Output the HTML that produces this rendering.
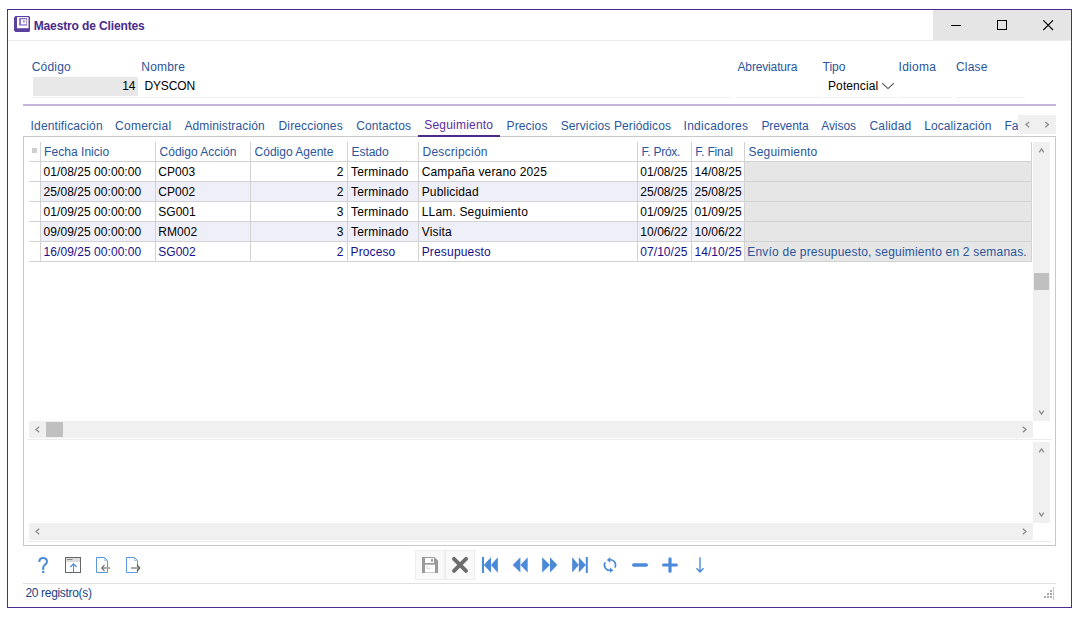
<!DOCTYPE html>
<html><head><meta charset="utf-8">
<style>
*{margin:0;padding:0;box-sizing:border-box}
html,body{width:1080px;height:618px;overflow:hidden;background:#fff;font-family:"Liberation Sans",sans-serif;font-size:12px;color:#000}
.a{position:absolute}
.t{position:absolute;white-space:nowrap;line-height:14px}
</style></head><body>
<div class="a" style="left:7px;top:9px;width:1065px;height:599px;border:1px solid #4b2c8c"></div>
<div class="a" style="left:933px;top:10px;width:138px;height:30px;background:#e5e5e5"></div>
<div class="a" style="left:8px;top:40px;width:925px;height:1px;background:#ececec"></div>
<div class="a" style="left:933px;top:40px;width:138px;height:1px;background:#ececec"></div>
<svg class="a" style="left:0;top:0" width="40" height="40" viewBox="0 0 40 40">
<path d="M15.5 16 H29 L30 17 V31 L29 32 H15.5 L14 30.5 V17.5 Z" fill="#5a3f9e"/>
<rect x="17" y="17.1" width="11.5" height="11.1" fill="#fff"/>
<rect x="19.1" y="18" width="7.9" height="7.6" fill="#8a72c2"/>
<rect x="21" y="19.3" width="5.3" height="5" fill="#fff"/>
<rect x="22.8" y="20.1" width="2" height="2.6" fill="#a99bd3"/>
</svg>
<div class="a" style="left:951px;top:25px;width:10px;height:1px;background:#000"></div>
<div class="a" style="left:997px;top:20px;width:10px;height:10px;border:1px solid #000"></div>
<svg class="a" style="left:1043px;top:20px" width="11" height="11" viewBox="0 0 11 11"><path d="M0.3 0.3L10 10M10 0.3L0.3 10" stroke="#000" stroke-width="1.1"/></svg>
<div class="a" style="left:33px;top:77px;width:105px;height:19px;background:#e8e8e8"></div>
<svg class="a" style="left:882px;top:83px" width="12" height="7" viewBox="0 0 12 7"><path d="M0.3 0.2L6 5.6L11.7 0.2" stroke="#555" stroke-width="1.05" fill="none"/></svg>
<div class="a" style="left:31px;top:97px;width:109px;height:1px;background:#efefef"></div>
<div class="a" style="left:141px;top:97px;width:590px;height:1px;background:#efefef"></div>
<div class="a" style="left:736px;top:97px;width:85px;height:1px;background:#efefef"></div>
<div class="a" style="left:823px;top:97px;width:74px;height:1px;background:#efefef"></div>
<div class="a" style="left:899px;top:97px;width:53px;height:1px;background:#efefef"></div>
<div class="a" style="left:956px;top:97px;width:69px;height:1px;background:#efefef"></div>
<div class="a" style="left:23px;top:104px;width:1033px;height:2px;background:#c3b5da"></div>
<div class="a" style="left:23px;top:136px;width:1033px;height:410px;border:1px solid #c8c8c8"></div>
<div class="a" style="left:418px;top:135px;width:82px;height:2px;background:#4b2a8a"></div>
<div class="a" style="left:745px;top:162px;width:286px;height:19px;background:#e6e6e6"></div>
<div class="a" style="left:41px;top:182px;width:990px;height:19px;background:#efeff9"></div>
<div class="a" style="left:745px;top:182px;width:286px;height:19px;background:#e6e6e6"></div>
<div class="a" style="left:745px;top:202px;width:286px;height:19px;background:#e6e6e6"></div>
<div class="a" style="left:41px;top:222px;width:990px;height:19px;background:#efeff9"></div>
<div class="a" style="left:745px;top:222px;width:286px;height:19px;background:#e6e6e6"></div>
<div class="a" style="left:745px;top:242px;width:286px;height:19px;background:#e6e6e6"></div>
<div class="a" style="left:40px;top:142px;width:1px;height:120px;background:#d2d2d2"></div>
<div class="a" style="left:155px;top:142px;width:1px;height:120px;background:#d2d2d2"></div>
<div class="a" style="left:250px;top:142px;width:1px;height:120px;background:#d2d2d2"></div>
<div class="a" style="left:347px;top:142px;width:1px;height:120px;background:#d2d2d2"></div>
<div class="a" style="left:418px;top:142px;width:1px;height:120px;background:#d2d2d2"></div>
<div class="a" style="left:637px;top:142px;width:1px;height:120px;background:#d2d2d2"></div>
<div class="a" style="left:691px;top:142px;width:1px;height:120px;background:#d2d2d2"></div>
<div class="a" style="left:744px;top:142px;width:1px;height:120px;background:#d2d2d2"></div>
<div class="a" style="left:1031px;top:142px;width:1px;height:120px;background:#d2d2d2"></div>
<div class="a" style="left:29px;top:161px;width:1003px;height:1px;background:#d2d2d2"></div>
<div class="a" style="left:29px;top:181px;width:1003px;height:1px;background:#d2d2d2"></div>
<div class="a" style="left:29px;top:201px;width:1003px;height:1px;background:#d2d2d2"></div>
<div class="a" style="left:29px;top:221px;width:1003px;height:1px;background:#d2d2d2"></div>
<div class="a" style="left:29px;top:241px;width:1003px;height:1px;background:#d2d2d2"></div>
<div class="a" style="left:29px;top:261px;width:1003px;height:1px;background:#d2d2d2"></div>
<div class="a" style="left:32px;top:148px;width:5px;height:5px;background:#cfcfcf"></div>
<div class="t" style="left:33.70px;top:19px;color:#4a2a8a;font-weight:bold;letter-spacing:-0.13px">Maestro de Clientes</div>
<div class="t" style="left:31.70px;top:60px;color:#2a559c;letter-spacing:0.2px">Código</div>
<div class="t" style="left:141.30px;top:60px;color:#2a559c;letter-spacing:0.2px">Nombre</div>
<div class="t" style="left:737.50px;top:60px;color:#2a559c;letter-spacing:-0.15px">Abreviatura</div>
<div class="t" style="left:822.50px;top:60px;color:#2a559c">Tipo</div>
<div class="t" style="left:898.50px;top:60px;color:#2a559c;letter-spacing:0.3px">Idioma</div>
<div class="t" style="left:956.00px;top:60px;color:#2a559c;letter-spacing:0.2px">Clase</div>
<div class="t" style="left:122.20px;top:79px;color:#000">14</div>
<div class="t" style="left:144.50px;top:79px;color:#000;letter-spacing:-0.15px">DYSCON</div>
<div class="t" style="left:828.00px;top:79px;color:#000;letter-spacing:0.1px">Potencial</div>
<div class="t" style="left:30.60px;top:119px;color:#2a559c;letter-spacing:0.15px">Identificación</div>
<div class="t" style="left:115.10px;top:119px;color:#2a559c;letter-spacing:0.25px">Comercial</div>
<div class="t" style="left:184.40px;top:119px;color:#2a559c;letter-spacing:0.12px">Administración</div>
<div class="t" style="left:278.50px;top:119px;color:#2a559c;letter-spacing:0.15px">Direcciones</div>
<div class="t" style="left:356.30px;top:119px;color:#2a559c;letter-spacing:0.09px">Contactos</div>
<div class="t" style="left:506.50px;top:119px;color:#2a559c;letter-spacing:0.15px">Precios</div>
<div class="t" style="left:560.70px;top:119px;color:#2a559c;letter-spacing:0.12px">Servicios Periódicos</div>
<div class="t" style="left:683.60px;top:119px;color:#2a559c;letter-spacing:0.24px">Indicadores</div>
<div class="t" style="left:761.40px;top:119px;color:#2a559c;letter-spacing:-0.12px">Preventa</div>
<div class="t" style="left:821.20px;top:119px;color:#2a559c;letter-spacing:-0.05px">Avisos</div>
<div class="t" style="left:869.40px;top:119px;color:#2a559c;letter-spacing:0.2px">Calidad</div>
<div class="t" style="left:924.20px;top:119px;color:#2a559c;letter-spacing:0.1px">Localización</div>
<div class="t" style="left:1004.40px;top:119px;color:#2a559c;letter-spacing:0.1px">Fa</div>
<div class="t" style="left:424.30px;top:118px;color:#5b2d9e;letter-spacing:0.2px">Seguimiento</div>
<div class="t" style="left:44.10px;top:145px;color:#2a559c;letter-spacing:0.04px">Fecha Inicio</div>
<div class="t" style="left:159.60px;top:145px;color:#2a559c">Código Acción</div>
<div class="t" style="left:254.60px;top:145px;color:#2a559c">Código Agente</div>
<div class="t" style="left:351.50px;top:145px;color:#2a559c;letter-spacing:-0.05px">Estado</div>
<div class="t" style="left:422.60px;top:145px;color:#2a559c;letter-spacing:0.22px">Descripción</div>
<div class="t" style="left:641.50px;top:145px;color:#2a559c;letter-spacing:-0.25px">F. Próx.</div>
<div class="t" style="left:695.20px;top:145px;color:#2a559c;letter-spacing:-0.15px">F. Final</div>
<div class="t" style="left:748.50px;top:145px;color:#2a559c;letter-spacing:0.2px">Seguimiento</div>
<div class="t" style="left:43.60px;top:165px;color:#000;letter-spacing:0.05px">01/08/25 00:00:00</div>
<div class="t" style="left:158.20px;top:165px;color:#000;letter-spacing:0.05px">CP003</div>
<div class="t" style="left:336.70px;top:165px;color:#000">2</div>
<div class="t" style="left:351.10px;top:165px;color:#000;letter-spacing:0.17px">Terminado</div>
<div class="t" style="left:421.70px;top:165px;color:#000;letter-spacing:0.17px">Campaña verano 2025</div>
<div class="t" style="left:640.30px;top:165px;color:#000;letter-spacing:0.05px">01/08/25</div>
<div class="t" style="left:694.50px;top:165px;color:#000;letter-spacing:0.05px">14/08/25</div>
<div class="t" style="left:43.60px;top:185px;color:#000;letter-spacing:0.05px">25/08/25 00:00:00</div>
<div class="t" style="left:158.20px;top:185px;color:#000;letter-spacing:0.05px">CP002</div>
<div class="t" style="left:336.70px;top:185px;color:#000">2</div>
<div class="t" style="left:351.10px;top:185px;color:#000;letter-spacing:0.17px">Terminado</div>
<div class="t" style="left:421.70px;top:185px;color:#000;letter-spacing:0.17px">Publicidad</div>
<div class="t" style="left:640.30px;top:185px;color:#000;letter-spacing:0.05px">25/08/25</div>
<div class="t" style="left:694.50px;top:185px;color:#000;letter-spacing:0.05px">25/08/25</div>
<div class="t" style="left:43.60px;top:205px;color:#000;letter-spacing:0.05px">01/09/25 00:00:00</div>
<div class="t" style="left:158.20px;top:205px;color:#000;letter-spacing:0.05px">SG001</div>
<div class="t" style="left:336.70px;top:205px;color:#000">3</div>
<div class="t" style="left:351.10px;top:205px;color:#000;letter-spacing:0.17px">Terminado</div>
<div class="t" style="left:421.70px;top:205px;color:#000;letter-spacing:0.17px">LLam. Seguimiento</div>
<div class="t" style="left:640.30px;top:205px;color:#000;letter-spacing:0.05px">01/09/25</div>
<div class="t" style="left:694.50px;top:205px;color:#000;letter-spacing:0.05px">01/09/25</div>
<div class="t" style="left:43.60px;top:225px;color:#000;letter-spacing:0.05px">09/09/25 00:00:00</div>
<div class="t" style="left:158.20px;top:225px;color:#000;letter-spacing:0.05px">RM002</div>
<div class="t" style="left:336.70px;top:225px;color:#000">3</div>
<div class="t" style="left:351.10px;top:225px;color:#000;letter-spacing:0.17px">Terminado</div>
<div class="t" style="left:421.70px;top:225px;color:#000;letter-spacing:0.17px">Visita</div>
<div class="t" style="left:640.30px;top:225px;color:#000;letter-spacing:0.05px">10/06/22</div>
<div class="t" style="left:694.50px;top:225px;color:#000;letter-spacing:0.05px">10/06/22</div>
<div class="t" style="left:43.60px;top:245px;color:#16118a;letter-spacing:0.05px">16/09/25 00:00:00</div>
<div class="t" style="left:158.20px;top:245px;color:#16118a;letter-spacing:0.05px">SG002</div>
<div class="t" style="left:336.70px;top:245px;color:#16118a">2</div>
<div class="t" style="left:350.60px;top:245px;color:#16118a;letter-spacing:0.1px">Proceso</div>
<div class="t" style="left:421.70px;top:245px;color:#16118a;letter-spacing:0.17px">Presupuesto</div>
<div class="t" style="left:640.30px;top:245px;color:#16118a;letter-spacing:0.05px">07/10/25</div>
<div class="t" style="left:694.50px;top:245px;color:#16118a;letter-spacing:0.05px">14/10/25</div>
<div class="t" style="left:747.30px;top:245px;color:#2a559c;letter-spacing:0.2px">Envío de presupuesto, seguimiento en 2 semanas.</div>
<div class="t" style="left:25.40px;top:586px;color:#213f84;letter-spacing:-0.32px">20 registro(s)</div>
<div class="a" style="left:1018px;top:115px;width:38px;height:19px;background:#f0f0f0"></div>
<div class="a" style="left:1033px;top:142px;width:17px;height:279px;background:#f0f0f0"></div>
<div class="a" style="left:1034px;top:273px;width:15px;height:17px;background:#c0c0c0"></div>
<div class="a" style="left:29px;top:421px;width:1004px;height:17px;background:#f0f0f0"></div>
<div class="a" style="left:46px;top:422px;width:17px;height:15px;background:#c0c0c0"></div>
<div class="a" style="left:27px;top:439px;width:1025px;height:1px;background:#ececec"></div>
<div class="a" style="left:1033px;top:442px;width:17px;height:81px;background:#f0f0f0"></div>
<div class="a" style="left:29px;top:523px;width:1004px;height:17px;background:#f0f0f0"></div>
<div class="a" style="left:27px;top:541px;width:1025px;height:1px;background:#ececec"></div>
<div class="a" style="left:23px;top:583px;width:1033px;height:1px;background:#e0e0e0"></div>
<svg class="a" style="left:0;top:0" width="1080" height="618"><path d="M1029.2 121.89999999999999L1026 124.6L1029.2 127.3 M1045.3 121.89999999999999L1048.5 124.6L1045.3 127.3 M1039.2 152.3L1041.5 149L1043.8 152.3 M1039.2 410.7L1041.5 414L1043.8 410.7 M39.2 426.8L36 429.5L39.2 432.2 M1022.8 426.8L1026 429.5L1022.8 432.2 M1039.2 452.3L1041.5 449L1043.8 452.3 M1039.2 512.7L1041.5 516L1043.8 512.7 M39.2 528.8L36 531.5L39.2 534.2 M1022.8 528.8L1026 531.5L1022.8 534.2" stroke="#8c8c8c" stroke-width="1.3" fill="none"/></svg>
<!-- footer icons -->
<svg class="a" style="left:0;top:0" width="1080" height="618" viewBox="0 0 1080 618">
<g fill="none" stroke="#4a8ad8" stroke-width="2">
<path d="M39.3 562 C39.3 556.8 47 556.8 47 561.5 C47 564.5 43.2 565 43.2 567.5 L43.2 570"/>
</g>
<rect x="42.1" y="571" width="2.2" height="2" fill="#4a8ad8"/>
<!-- window up icon -->
<rect x="65.5" y="557.5" width="15" height="15" fill="#fff" stroke="#666" stroke-width="1"/>
<rect x="66" y="558" width="14" height="4" fill="#dcdcdc"/>
<line x1="67" y1="559.5" x2="72.5" y2="559.5" stroke="#888" stroke-width="1"/>
<path d="M73.5 573 L73.5 564 M70.3 567 L73.5 563.8 L76.7 567" stroke="#4a8ad8" stroke-width="1.1" fill="none"/>
<!-- doc left -->
<path d="M96.5 557.5 L104.5 557.5 L107.5 560.5 L107.5 572.5 L96.5 572.5 Z" fill="none" stroke="#5b97de" stroke-width="1"/>
<path d="M104.5 557.5 L104.5 560.5 L107.5 560.5" fill="none" stroke="#9fc2ec" stroke-width="1"/>
<path d="M102 568 L110 568" stroke="#aaa" stroke-width="2"/>
<path d="M104.5 565 L101.8 568 L104.5 571" stroke="#555" stroke-width="1.1" fill="none"/>
<!-- doc right -->
<path d="M126.5 557.5 L134.5 557.5 L137.5 560.5 L137.5 572.5 L126.5 572.5 Z" fill="none" stroke="#5b97de" stroke-width="1"/>
<path d="M134.5 557.5 L134.5 560.5 L137.5 560.5" fill="none" stroke="#9fc2ec" stroke-width="1"/>
<path d="M131 568 L139 568" stroke="#aaa" stroke-width="2"/>
<path d="M137 565 L139.8 568 L137 571" stroke="#555" stroke-width="1.1" fill="none"/>

<!-- buttons -->
<rect x="415.5" y="550.5" width="29" height="29" fill="#f9f9f9" stroke="#ededed" stroke-width="1"/>
<rect x="445.5" y="550.5" width="29" height="29" fill="#f9f9f9" stroke="#ededed" stroke-width="1"/>
<!-- save -->
<path d="M422 557 L434.3 557 L438 560.6 L438 573 L422 573 Z" fill="#9a9a9a"/>
<rect x="425" y="558" width="9" height="5" fill="#fff"/>
<rect x="431" y="559" width="2" height="2.7" fill="#9a9a9a"/>
<rect x="425" y="564.7" width="10" height="7.8" fill="#fff"/>
<path d="M426.3 566.8 L428 566.8 M426.3 568.3 L430.5 568.3" stroke="#c4c4c4" stroke-width="0.7"/>
<!-- X -->
<path d="M454 558.9 L466 570.9 M466 558.9 L454 570.9" stroke="#6d6d6d" stroke-width="3.9" stroke-linecap="round"/>
<g fill="#4a8ad8">
<!-- first -->
<rect x="482" y="557" width="2" height="16"/>
<path d="M483.8 565 L491 557.3 L491 572.7 Z"/>
<path d="M491 565 L497.8 557.3 L497.8 572.7 Z"/>
<!-- prev -->
<path d="M512.7 565 L520.4 557.3 L520.4 572.6 Z"/>
<path d="M520.4 565 L527.7 557.3 L527.7 572.6 Z"/>
<!-- next -->
<path d="M542.2 557.3 L550 565 L542.2 572.6 Z"/>
<path d="M550 557.3 L557.3 565 L550 572.6 Z"/>
<!-- last -->
<path d="M572.2 557.3 L578.8 565 L572.2 572.6 Z"/>
<path d="M578.8 557.3 L585.8 565 L578.8 572.6 Z"/>
<rect x="585.8" y="557" width="2" height="16"/>
</g>
<!-- refresh -->
<g fill="none" stroke="#4a8ad8" stroke-width="1.6">
<path d="M609.5 559.8 A5.2 5.2 0 0 1 614.8 567.6"/>
<path d="M605.2 562.3 A5.2 5.2 0 0 0 610.5 570.2"/>
</g>
<path d="M606.9 560 L610.3 557 L610.3 562.8 Z" fill="#4a8ad8"/>
<path d="M613.3 570.2 L609.9 567.4 L609.9 573 Z" fill="#4a8ad8"/>
<!-- minus plus -->
<path d="M633.8 565 L646.2 565" stroke="#4a8ad8" stroke-width="3.6" stroke-linecap="round"/>
<path d="M663.6 565 L676.3 565 M670 558.8 L670 571.2" stroke="#4a8ad8" stroke-width="3.2" stroke-linecap="round"/>
<!-- down -->
<path d="M700 557.2 L700 572.5 M696.5 568.3 L700 572 L703.5 568.3" stroke="#4a8ad8" stroke-width="1.4" fill="none"/>
<!-- resize grip -->
<g fill="#ababab">
<rect x="1050" y="590" width="2" height="2"/>
<rect x="1047" y="593" width="2" height="2"/><rect x="1050" y="593" width="2" height="2"/>
<rect x="1044" y="596" width="2" height="2"/><rect x="1047" y="596" width="2" height="2"/><rect x="1050" y="596" width="2" height="2"/>
</g>
<rect x="1053" y="587" width="1" height="13" fill="#c8c8c8"/>
</svg>
</body></html>
